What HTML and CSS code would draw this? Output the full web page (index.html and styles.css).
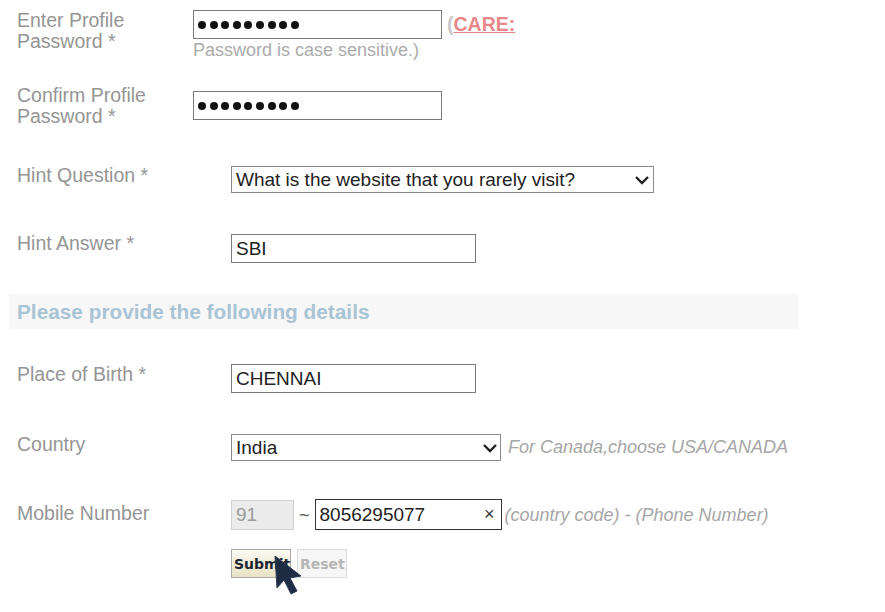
FILE: index.html
```html
<!DOCTYPE html>
<html>
<head>
<meta charset="utf-8">
<link rel="stylesheet" href="styles.css">
</head>
<body>
<div class="form">
  <div class="row r1">
    <div class="label narrow">Enter Profile<br>Password *</div>
    <div class="field">
      <div class="line">
        <div class="box pwd"><span class="dot"></span><span class="dot"></span><span class="dot"></span><span class="dot"></span><span class="dot"></span><span class="dot"></span><span class="dot"></span><span class="dot"></span><span class="dot"></span></div>
        <span class="care">(<a class="care-link">CARE:</a></span>
      </div>
      <div class="hint">Password is case sensitive.)</div>
    </div>
  </div>

  <div class="row r2">
    <div class="label narrow">Confirm Profile<br>Password *</div>
    <div class="field f2">
      <div class="box pwd"><span class="dot"></span><span class="dot"></span><span class="dot"></span><span class="dot"></span><span class="dot"></span><span class="dot"></span><span class="dot"></span><span class="dot"></span><span class="dot"></span></div>
    </div>
  </div>

  <div class="row r3">
    <div class="label wide">Hint Question *</div>
    <div class="field f3">
      <div class="select sel-q"><span>What is the website that you rarely visit?</span>
        <svg class="chev" width="16" height="10" viewBox="0 0 16 10"><path d="M2 2 L8 8 L14 2" fill="none" stroke="#222" stroke-width="2.4"/></svg>
      </div>
    </div>
  </div>

  <div class="row r4">
    <div class="label wide">Hint Answer *</div>
    <div class="field f4">
      <div class="box text ans">SBI</div>
    </div>
  </div>

  <div class="band">Please provide the following details</div>

  <div class="row r5">
    <div class="label wide">Place of Birth *</div>
    <div class="field">
      <div class="box text ans">CHENNAI</div>
    </div>
  </div>

  <div class="row r6">
    <div class="label wide">Country</div>
    <div class="field line">
      <div class="select sel-c"><span>India</span>
        <svg class="chev" width="16" height="10" viewBox="0 0 16 10"><path d="M2 2 L8 8 L14 2" fill="none" stroke="#222" stroke-width="2.4"/></svg>
      </div>
      <span class="note">For Canada,choose USA/CANADA</span>
    </div>
  </div>

  <div class="row r7">
    <div class="label wide l7">Mobile Number</div>
    <div class="field line">
      <div class="box text code">91</div>
      <span class="tilde">~</span>
      <div class="box text phone"><span>8056295077</span><span class="clear">×</span></div>
      <span class="note n7">(country code) - (Phone Number)</span>
    </div>
  </div>

  <div class="buttons">
    <button class="btn submit">Submit</button>
    <button class="btn reset">Reset</button>
    <svg class="cursor" width="34" height="42" viewBox="0 0 34 42"><path d="M2 1 L4 33 L11 25 L18 39 L24 36 L17 23 L28 21 Z" fill="#1e2d44" stroke="#2b3a52" stroke-width="1"/></svg>
  </div>
</div>
</body>
</html>
```

FILE: styles.css
```css
html, body {
  margin: 0;
  padding: 0;
  background: #ffffff;
}
body {
  font-family: "Liberation Sans", Arial, sans-serif;
  font-size: 18px;
  color: #222;
}
.form {
  position: relative;
  display: flex;
  flex-direction: column;
  padding-top: 10px;
  padding-bottom: 34px;
}
.row {
  display: flex;
  align-items: flex-start;
  padding-left: 17px;
}
.label {
  color: #959595;
  font-size: 19.5px;
  line-height: 21px;
  flex: none;
}
.label.narrow { width: 176px; }
.label.wide { width: 214px; }
.field {
  display: flex;
  flex-direction: column;
}
.line {
  display: flex;
  flex-direction: row;
  align-items: center;
}
.box {
  box-sizing: border-box;
  border: 1px solid #7a7a7a;
  background: #fff;
  height: 29px;
}
.pwd {
  width: 249px;
  display: flex;
  align-items: center;
  gap: 3.6px;
  padding-left: 4px;
}
.dot {
  width: 8px;
  height: 8px;
  border-radius: 50%;
  background: #111;
  flex: none;
}
.care {
  color: #c8c8c8;
  font-size: 19.5px;
  margin-left: 5px;
  font-weight: bold;
}
.care-link {
  color: #e8878a;
  text-decoration: underline;
}
.hint {
  color: #ababab;
  font-size: 18px;
  line-height: 21px;
  margin-top: 1px;
}
.r2 { margin-top: 24px; }
.f2 { margin-top: 6px; }
.r3 { margin-top: 38px; }
.f3 { margin-top: 1px; }
.r4 { margin-top: 40px; }
.f4 { margin-top: 1px; }
.select {
  box-sizing: border-box;
  height: 27px;
  border: 1px solid #8a8a8a;
  display: flex;
  align-items: center;
  justify-content: space-between;
  padding: 0 3px 0 4px;
  color: #222;
  font-size: 19px;
  background: #fff;
}
.sel-q { width: 423px; }
.sel-c { width: 270px; padding-right: 2px; }
.chev { flex: none; }
.text {
  display: flex;
  align-items: center;
  padding-left: 4px;
  font-size: 19px;
  color: #222;
}
.ans { width: 245px; }
.band {
  margin: 31px 0 0 9px;
  width: 789px;
  height: 35px;
  box-sizing: border-box;
  background: #f7f7f7;
  color: #a9c4d4;
  font-weight: bold;
  font-size: 20.8px;
  line-height: 36px;
  padding-left: 8px;
}
.r5 { margin-top: 35px; }
.r6 { margin-top: 41px; }
.note {
  font-style: italic;
  color: #a6a6a6;
  font-size: 18px;
  margin-left: 7px;
}
.n7 { margin-left: 3px; }
.r7 { margin-top: 39px; }
.l7 { margin-top: 3px; }
.code {
  width: 63px;
  height: 30px;
  background: #ebebeb;
  border-color: #cfcfcf;
  color: #9a9a9a;
}
.tilde {
  color: #555;
  margin: 0 5px 0 5px;
}
.phone {
  width: 187px;
  height: 31px;
  border-color: #333;
  justify-content: space-between;
  padding-right: 6px;
  margin-top: -1px;
}
.clear {
  font-size: 18px;
  color: #333;
}
.buttons {
  position: relative;
  display: flex;
  gap: 6px;
  margin: 19px 0 0 231px;
}
.btn {
  box-sizing: border-box;
  height: 29px;
  font-family: "DejaVu Sans", Verdana, sans-serif;
  font-weight: bold;
  font-size: 14px;
  padding: 0 2px;
  border-radius: 0;
}
.submit {
  width: 60px;
  color: #1d2530;
  border: 1px solid #a9a9a9;
  background: linear-gradient(#fbfaf3, #e8e1c4);
}
.reset {
  width: 50px;
  color: #b5b5b5;
  border: 1px solid #dcdcdc;
  background: #f6f6f6;
}
.cursor {
  position: absolute;
  left: 42px;
  top: 6px;
}
```
